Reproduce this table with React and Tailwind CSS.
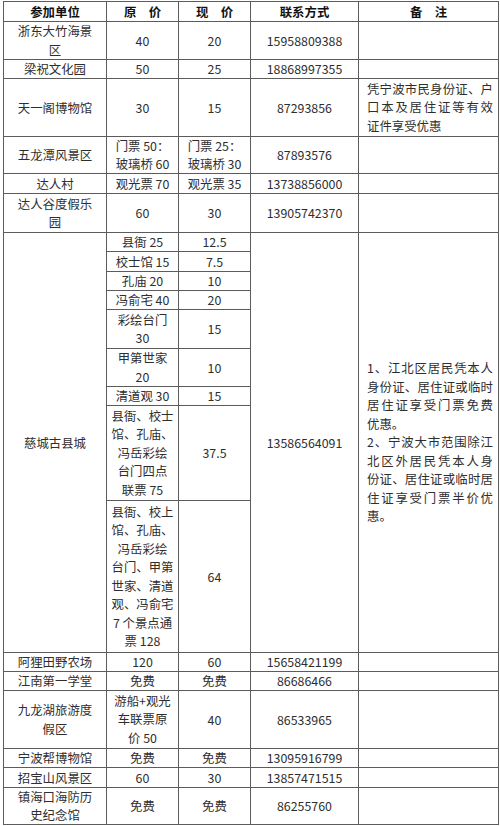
import React from "react";

const font = { fontFamily: '"Noto Sans CJK SC", "Noto Sans", sans-serif' };

// one cell: text given line by line, so the breaks match the picture
const Cell = ({ lines = [], rowSpan, bold, tall, left, justify }) => (
    <td
        rowSpan={rowSpan}
        className={
            "border border-[#5c5c5c] p-0 align-middle " +
            (left ? "pl-[8px] pr-[5px] text-left " : "px-[4px] text-center ") +
            (tall ? "leading-[18.5px] " : "leading-[18px] ") +
            (bold ? "font-bold text-[#111]" : "text-[#2e2e2e]")
        }
    >
        {lines.map((t, i) => (
            <div
                key={i}
                className={
                    "whitespace-nowrap " +
                    (justify && i < lines.length - 1 && !t.endsWith("。") ? "[text-align-last:justify]" : "")
                }
            >
                {t}
            </div>
        ))}
    </td>
);

const remark1 = ["凭宁波市民身份证、户", "口本及居住证等有效", "证件享受优惠"];
const remark2 = [
    "1、江北区居民凭本人",
    "身份证、居住证或临时",
    "居住证享受门票免费",
    "优惠。",
    "2、宁波大市范围除江",
    "北区外居民凭本人身",
    "份证、居住证或临时居",
    "住证享受门票半价优",
    "惠。",
];

const simple = [
    // [height, name, original, now, phone]
    [19, ["阿狸田野农场"], ["120"], ["60"], "15658421199"],
    [19, ["江南第一学堂"], ["免费"], ["免费"], "86686466"],
    [58, ["九龙湖旅游度", "假区"], ["游船+观光", "车联票原", "价 50"], ["40"], "86533965"],
    [19, ["宁波帮博物馆"], ["免费"], ["免费"], "13095916799"],
    [20, ["招宝山风景区"], ["60"], ["30"], "13857471515"],
    [37, ["镇海口海防历", "史纪念馆"], ["免费"], ["免费"], "86255760"],
];

const cicheng = [
    [19, ["县衙 25"], ["12.5"]],
    [20, ["校士馆 15"], ["7.5"]],
    [19, ["孔庙 20"], ["10"]],
    [19, ["冯俞宅 40"], ["20"]],
    [39, ["彩绘台门", "30"], ["15"]],
    [38, ["甲第世家", "20"], ["10"]],
    [18, ["清道观 30"], ["15"]],
    [95, ["县衙、校士", "馆、孔庙、", "冯岳彩绘", "台门四点", "联票 75"], ["37.5"]],
    [152, ["县衙、校上", "馆、孔庙、", "冯岳彩绘", "台门、甲第", "世家、清道", "观、冯俞宅", "7 个景点通", "票 128"], ["64"]],
];

export default function App() {
    return (
        <div className="w-[500px] min-h-[826px] bg-white pt-[1px] pl-[3px]" style={font}>
            <table className="w-[495px] table-fixed border-collapse text-[12.4px]">
                <colgroup>
                    <col className="w-[103px]" />
                    <col className="w-[72px]" />
                    <col className="w-[72px]" />
                    <col className="w-[108px]" />
                    <col className="w-[140px]" />
                </colgroup>
                <tbody>
                    <tr className="h-[20px]">
                        <Cell bold lines={["参加单位"]} />
                        <Cell bold lines={["原　价"]} />
                        <Cell bold lines={["现　价"]} />
                        <Cell bold lines={["联系方式"]} />
                        <Cell bold lines={["备　注"]} />
                    </tr>
                    <tr className="h-[38px]">
                        <Cell tall lines={["浙东大竹海景", "区"]} />
                        <Cell lines={["40"]} />
                        <Cell lines={["20"]} />
                        <Cell lines={["15958809388"]} />
                        <Cell />
                    </tr>
                    <tr className="h-[19px]">
                        <Cell lines={["梁祝文化园"]} />
                        <Cell lines={["50"]} />
                        <Cell lines={["25"]} />
                        <Cell lines={["18868997355"]} />
                        <Cell />
                    </tr>
                    <tr className="h-[58px]">
                        <Cell lines={["天一阁博物馆"]} />
                        <Cell lines={["30"]} />
                        <Cell lines={["15"]} />
                        <Cell lines={["87293856"]} />
                        <Cell left justify tall lines={remark1} />
                    </tr>
                    <tr className="h-[37px]">
                        <Cell lines={["五龙潭风景区"]} />
                        <Cell lines={["门票 50：", "玻璃桥 60"]} />
                        <Cell lines={["门票 25：", "玻璃桥 30"]} />
                        <Cell lines={["87893576"]} />
                        <Cell />
                    </tr>
                    <tr className="h-[20px]">
                        <Cell lines={["达人村"]} />
                        <Cell lines={["观光票 70"]} />
                        <Cell lines={["观光票 35"]} />
                        <Cell lines={["13738856000"]} />
                        <Cell />
                    </tr>
                    <tr className="h-[39px]">
                        <Cell tall lines={["达人谷度假乐", "园"]} />
                        <Cell lines={["60"]} />
                        <Cell lines={["30"]} />
                        <Cell lines={["13905742370"]} />
                        <Cell />
                    </tr>

                    {/* 慈城古县城: merged name, phone and remark */}
                    {cicheng.map(([h, a, b], i) => (
                        <tr key={i} style={{ height: h }}>
                            {i === 0 && <Cell rowSpan={cicheng.length} lines={["慈城古县城"]} />}
                            <Cell tall={h >= 38} lines={a} />
                            <Cell lines={b} />
                            {i === 0 && <Cell rowSpan={cicheng.length} lines={["13586564091"]} />}
                            {i === 0 && <Cell rowSpan={cicheng.length} left justify tall lines={remark2} />}
                        </tr>
                    ))}

                    {simple.map(([h, name, a, b, phone], i) => (
                        <tr key={"s" + i} style={{ height: h }}>
                            <Cell tall={h >= 58} lines={name} />
                            <Cell tall={h >= 58} lines={a} />
                            <Cell lines={b} />
                            <Cell lines={[phone]} />
                            <Cell />
                        </tr>
                    ))}
                </tbody>
            </table>
        </div>
    );
}
